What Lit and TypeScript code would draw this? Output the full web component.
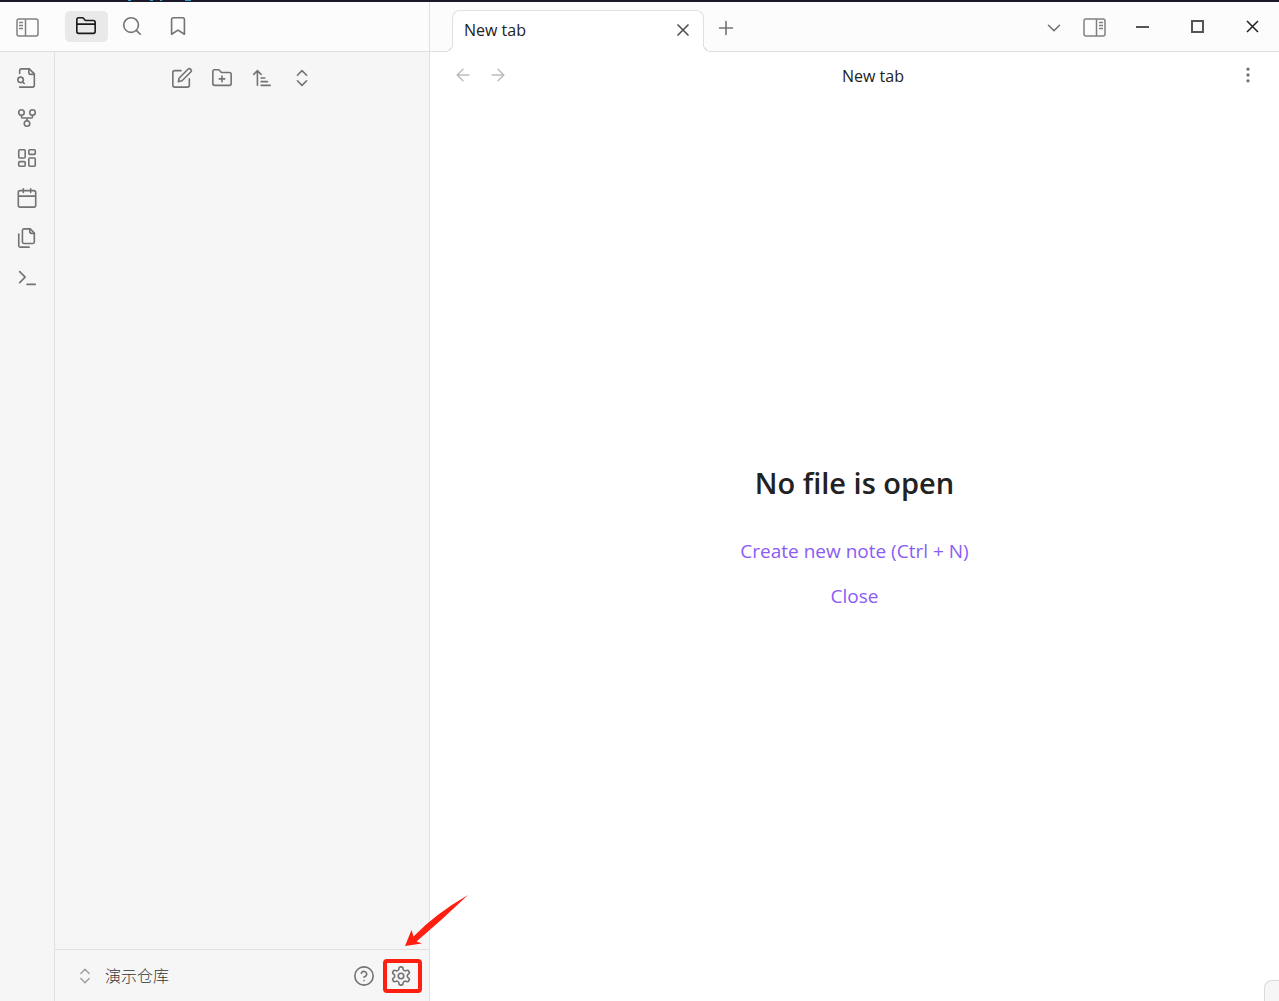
import { LitElement, html, css, svg, type SVGTemplateResult } from "lit";
import { customElement } from "lit/decorators.js";

const icons: Record<string, SVGTemplateResult> = {
  folder: svg`<path d="M20 20a2 2 0 0 0 2-2V8a2 2 0 0 0-2-2h-7.900a2 2 0 0 1-1.700-.9L9.600 3.900A2 2 0 0 0 7.900 3H4a2 2 0 0 0-2 2v13a2 2 0 0 0 2 2Z"/><path d="M2 10h20"/>`,
  search: svg`<circle cx="11" cy="11" r="8"/><path d="m21 21-4.300-4.300"/>`,
  bookmark: svg`<path d="m19 21-7-4.500L5 21V5a2 2 0 0 1 2-2h10a2 2 0 0 1 2 2v16z"/>`,
  fileSearch: svg`<path d="M4 22h14a2 2 0 0 0 2-2V7.500L14.500 2H6a2 2 0 0 0-2 2v3"/><path d="M14 2v4a2 2 0 0 0 2 2h4"/><circle cx="5" cy="14" r="3"/><path d="m9 18-1.500-1.500"/>`,
  graph: svg`<circle cx="12" cy="18" r="3"/><circle cx="6" cy="6" r="3"/><circle cx="18" cy="6" r="3"/><path d="M18 9v2c0 .6-.4 1-1 1H7c-.6 0-1-.4-1-1V9M12 12v3"/>`,
  dashboard: svg`<rect x="3" y="3" width="7" height="9" rx="1"/><rect x="14" y="3" width="7" height="5" rx="1"/><rect x="14" y="12" width="7" height="9" rx="1"/><rect x="3" y="16" width="7" height="5" rx="1"/>`,
  calendar: svg`<rect x="2.500" y="4" width="19" height="18" rx="2"/><path d="M16 2v4M8 2v4M3 10h18"/>`,
  files: svg`<path d="M15.500 2H8.600c-.4 0-.8.2-1.100.5-.3.3-.5.7-.5 1.100v12.800c0 .4.2.8.5 1.100.3.3.7.5 1.100.5h9.800c.4 0 .8-.2 1.100-.5.3-.3.5-.7.5-1.100V6.500L15.500 2z"/><path d="M3 7.600v12.800c0 .4.2.8.5 1.100.3.3.7.5 1.100.5h9.800"/><path d="M15 2v3a2 2 0 0 0 2 2h3"/>`,
  terminal: svg`<path d="m4 17 6-6-6-6M12 19h9"/>`,
  edit: svg`<path d="M11 4H4a2 2 0 0 0-2 2v14a2 2 0 0 0 2 2h14a2 2 0 0 0 2-2v-7"/><path d="M18.500 2.500a2.121 2.121 0 0 1 3 3L12 15l-4 1 1-4 9.500-9.500z"/>`,
  folderPlus: svg`<path d="M12 10v6M9 13h6"/><path d="M20 20a2 2 0 0 0 2-2V8a2 2 0 0 0-2-2h-7.900a2 2 0 0 1-1.700-.9L9.600 3.900A2 2 0 0 0 7.900 3H4a2 2 0 0 0-2 2v13a2 2 0 0 0 2 2Z"/>`,
  sort: svg`<path d="m3 8 4-4 4 4M7 4v16M11 12h4M11 16h7M11 20h10"/>`,
  upDown: svg`<path d="m7 15 5 5 5-5M7 9l5-5 5 5"/>`,
  close: svg`<path d="M18 6 6 18M6 6l12 12"/>`,
  plus: svg`<path d="M5 12h14M12 5v14"/>`,
  down: svg`<path d="m6 9 6 6 6-6"/>`,
  left: svg`<path d="m12 19-7-7 7-7M19 12H5"/>`,
  right: svg`<path d="M5 12h14M12 5l7 7-7 7"/>`,
  more: svg`<circle cx="12" cy="5" r="1"/><circle cx="12" cy="12" r="1"/><circle cx="12" cy="19" r="1"/>`,
  help: svg`<circle cx="12" cy="12" r="10"/><path d="M9.090 9a3 3 0 0 1 5.830 1c0 2-3 3-3 3M12 17h.01"/>`,
  settings: svg`<path d="M12.220 2h-.44a2 2 0 0 0-2 2v.18a2 2 0 0 1-1 1.730l-.43.25a2 2 0 0 1-2 0l-.15-.08a2 2 0 0 0-2.730.73l-.22.38a2 2 0 0 0 .73 2.730l.15.1a2 2 0 0 1 1 1.720v.51a2 2 0 0 1-1 1.740l-.15.09a2 2 0 0 0-.73 2.730l.22.38a2 2 0 0 0 2.730.73l.15-.08a2 2 0 0 1 2 0l.43.25a2 2 0 0 1 1 1.730V20a2 2 0 0 0 2 2h.44a2 2 0 0 0 2-2v-.18a2 2 0 0 1 1-1.730l.43-.25a2 2 0 0 1 2 0l.15.08a2 2 0 0 0 2.730-.73l.22-.39a2 2 0 0 0-.73-2.730l-.15-.08a2 2 0 0 1-1-1.740v-.5a2 2 0 0 1 1-1.740l.15-.09a2 2 0 0 0 .73-2.730l-.22-.38a2 2 0 0 0-2.730-.73l-.15.08a2 2 0 0 1-2 0l-.43-.25a2 2 0 0 1-1-1.730V4a2 2 0 0 0-2-2z"/><circle cx="12" cy="12" r="3"/>`,
};

const icon = (name: string, size = "") =>
  html`<svg class="icon ${size}" viewBox="0 0 24 24" aria-hidden="true">${icons[name]}</svg>`;

/* Panel toggle; the right-hand one is the mirror image. */
const panelIcon = (side: "left" | "right") => html`
  <svg class="panel-icon" viewBox="0 0 23 19" aria-hidden="true">
    <g transform=${side === "right" ? "translate(23 0) scale(-1 1)" : ""}>
      <rect x="1" y="1" width="21" height="17" rx="2" />
      <path d="M9.500 1v17M3 4.500h4M3 7.500h4M3 10.500h4" />
    </g>
  </svg>`;

const ribbon = [
  ["fileSearch", "Open quick switcher"],
  ["graph", "Open graph view"],
  ["dashboard", "Create new canvas"],
  ["calendar", "Open today's daily note"],
  ["files", "Insert template"],
  ["terminal", "Open command palette"],
];

const fileActions = [
  ["edit", "New note"],
  ["folderPlus", "New folder"],
  ["sort", "Change sort order"],
  ["upDown", "Expand all"],
];

@customElement("app-root")
export class AppRoot extends LitElement {
  static styles = css`
    :host {
      display: block;
      --line: #e0e0e0;
      --side: #f6f6f6;
      --bar: #fcfcfc;
      --muted: #737373;
      --text: #222222;
      font-family: "Open Sans", "Noto Sans", "Noto Sans CJK SC", sans-serif;
      font-size: 16px;
      line-height: 24px;
      color: var(--text);
    }
    * { box-sizing: border-box; }
    .window {
      position: relative;
      display: flex;
      min-height: 100vh;
      padding-top: 2px;
      background:
        linear-gradient(
          to right,
          transparent 128px,
          #3d9cc4 128px 131px, transparent 131px 150px,
          #3d9cc4 150px 153px, transparent 153px 160px,
          #3d9cc4 160px 162px, transparent 162px 185px,
          #3d9cc4 185px 191px, transparent 191px
        ) 0 0 / 100% 1px no-repeat,
        linear-gradient(#1b1a2b 2px, #ffffff 2px);
      overflow: hidden;
    }
    button {
      display: flex;
      align-items: center;
      justify-content: center;
      padding: 0;
      border: 0;
      background: none;
      font: inherit;
      color: var(--muted);
      cursor: pointer;
    }
    .icon {
      display: block;
      width: 22px;
      height: 22px;
      fill: none;
      stroke: currentColor;
      stroke-width: 1.75;
      stroke-linecap: round;
      stroke-linejoin: round;
    }
    .icon.small { width: 20px; height: 20px; }
    .panel-icon {
      display: block;
      width: 23px;
      height: 19px;
      fill: none;
      stroke: #808080;
      stroke-width: 1.5;
    }
    .left {
      display: flex;
      flex-direction: column;
      flex: 0 0 430px;
      border-right: 1px solid var(--line);
      background: var(--side);
    }
    .bar {
      display: flex;
      flex: 0 0 50px;
      align-items: center;
      border-bottom: 1px solid var(--line);
      background: var(--bar);
    }
    .toggle { width: 54px; height: 40px; padding-top: 2px; }
    .side-tabs { display: flex; gap: 3px; padding-left: 11px; }
    .side-tab { width: 43px; height: 31px; padding: 0 1px 1px 0; border-radius: 5px; }
    .side-tab.active { background: #e9e9e9; color: #1a1a1a; }
    .left-body { display: flex; flex: 1; }
    .ribbon {
      display: flex;
      flex-direction: column;
      align-items: center;
      flex: 0 0 55px;
      padding-top: 6px;
      border-right: 1px solid var(--line);
    }
    .tool { width: 40px; height: 40px; }
    .bar .tool { padding-top: 2px; }
    .explorer { display: flex; flex: 1; flex-direction: column; }
    .actions { display: flex; flex: 1; align-items: flex-start; justify-content: center; padding-top: 6px; }
    .vault {
      display: flex;
      align-items: center;
      flex: 0 0 52px;
      padding: 0 8px 0 20px;
      border-top: 1px solid var(--line);
    }
    .vault-name { gap: 10px; margin-right: auto; color: #333333; font-weight: 300; }
    .vault-name .icon { color: #a0a0a0; }
    .foot { position: relative; width: 37px; height: 34px; padding-right: 3px; }
    .marker {
      position: absolute;
      inset: 0 -1px;
      border: 4px solid #ff1f10;
      border-radius: 4px;
    }
    .pointer {
      position: absolute;
      left: 19px;
      bottom: 44px;
      width: 66px;
      height: 54px;
      fill: #ff1f10;
      pointer-events: none;
    }
    .main { display: flex; flex: 1; flex-direction: column; min-width: 0; }
    .tabs { padding-left: 22px; }
    .tab {
      position: relative;
      display: flex;
      align-items: center;
      align-self: flex-end;
      flex: 0 1 252px;
      height: 42px;
      margin-bottom: -1px;
      padding: 0 6px 3px 11px;
      border: 1px solid var(--line);
      border-bottom: 0;
      border-radius: 8px 8px 0 0;
      background: #ffffff;
    }
    .tab::before, .tab::after {
      content: "";
      position: absolute;
      bottom: 0;
      width: 8px;
      height: 8px;
    }
    .tab::before {
      right: 100%;
      background: radial-gradient(circle at 0 0, var(--bar) 7px, var(--line) 7px, var(--line) 8px, #ffffff 8px);
    }
    .tab::after {
      left: 100%;
      background: radial-gradient(circle at 100% 0, var(--bar) 7px, var(--line) 7px, var(--line) 8px, #ffffff 8px);
    }
    .tab-title { flex: 1; }
    .tab-close { width: 28px; height: 28px; color: #505050; }
    .tab-close .icon { stroke-width: 2; }
    .new-tab { width: 44px; height: 40px; padding-top: 3px; margin-right: auto; }
    .control { width: 55px; height: 48px; padding-left: 2px; color: #555555; }
    .control.quit { color: #202020; }
    .glyph {
      display: block;
      width: 13px;
      height: 13px;
      fill: none;
      stroke: currentColor;
      stroke-width: 2;
    }
    .quit .glyph { stroke-width: 1.5; }
    .view-head { display: flex; align-items: center; height: 48px; padding: 0 14px 0 16px; }
    .nav { width: 35px; height: 35px; padding: 0 2px 2px 0; }
    .nav:disabled { color: #bcbcbc; cursor: default; }
    .view-title { flex: 1; text-align: center; }
    .nav.more { padding: 0 0 2px; }
    .more .icon { stroke-width: 2; }
    .empty {
      display: flex;
      flex: 1;
      flex-direction: column;
      align-items: center;
      justify-content: center;
      padding-bottom: 12px;
    }
    h1 { margin: 0 0 34px; font-size: 29px; line-height: 40px; font-weight: 600; }
    .action { margin-bottom: 17px; font-size: 19px; line-height: 28px; color: #8a5cf5; }
    .status {
      position: absolute;
      right: 0;
      bottom: 0;
      width: 15px;
      height: 21px;
      border: 1px solid #dadada;
      border-width: 1px 0 0 1px;
      border-radius: 8px 0 0 0;
      background: var(--side);
    }
  `;

  render() {
    return html`
      <div class="window">
        <aside class="left">
          <div class="bar">
            <button class="toggle" aria-label="Collapse left sidebar">${panelIcon("left")}</button>
            <nav class="side-tabs">
              <button class="side-tab active" aria-label="Files">${icon("folder")}</button>
              <button class="side-tab" aria-label="Search">${icon("search")}</button>
              <button class="side-tab" aria-label="Bookmarks">${icon("bookmark")}</button>
            </nav>
          </div>
          <div class="left-body">
            <nav class="ribbon">
              ${ribbon.map(([n, l]) => html`<button class="tool" aria-label=${l}>${icon(n)}</button>`)}
            </nav>
            <div class="explorer">
              <div class="actions">
                ${fileActions.map(([n, l]) => html`<button class="tool" aria-label=${l}>${icon(n)}</button>`)}
              </div>
              <footer class="vault">
                <button class="vault-name">${icon("upDown", "small")}<span>演示仓库</span></button>
                <button class="foot" aria-label="Help">${icon("help")}</button>
                <button class="foot" aria-label="Settings">
                  ${icon("settings")}
                  <span class="marker"></span>
                  <svg class="pointer" viewBox="0 0 66 54" aria-hidden="true">
                    <path d="M2 51 8.500 35l2 6.500Q32 19 65 0 40 24 13.500 46.500l5.500 2Z" />
                  </svg>
                </button>
              </footer>
            </div>
          </div>
        </aside>
        <main class="main">
          <header class="bar tabs">
            <div class="tab">
              <span class="tab-title">New tab</span>
              <button class="tab-close" aria-label="Close tab">${icon("close", "small")}</button>
            </div>
            <button class="new-tab" aria-label="New tab">${icon("plus")}</button>
            <button class="tool" aria-label="Tab list">${icon("down")}</button>
            <button class="tool" aria-label="Expand right sidebar">${panelIcon("right")}</button>
            <button class="control" aria-label="Minimize">
              <svg class="glyph" viewBox="0 0 13 13"><path d="M0 7h13" /></svg>
            </button>
            <button class="control" aria-label="Maximize">
              <svg class="glyph" viewBox="0 0 13 13"><rect x="1" y="1" width="11" height="11" /></svg>
            </button>
            <button class="control quit" aria-label="Close window">
              <svg class="glyph" viewBox="0 0 13 13"><path d="m1 1 11 11M12 1 1 12" /></svg>
            </button>
          </header>
          <div class="view-head">
            <button class="nav" aria-label="Back" disabled>${icon("left", "small")}</button>
            <button class="nav" aria-label="Forward" disabled>${icon("right", "small")}</button>
            <span class="view-title">New tab</span>
            <button class="nav more" aria-label="More options">${icon("more", "small")}</button>
          </div>
          <section class="empty">
            <h1>No file is open</h1>
            <button class="action">Create new note (Ctrl + N)</button>
            <button class="action">Close</button>
          </section>
        </main>
        <div class="status"></div>
      </div>
    `;
  }
}
